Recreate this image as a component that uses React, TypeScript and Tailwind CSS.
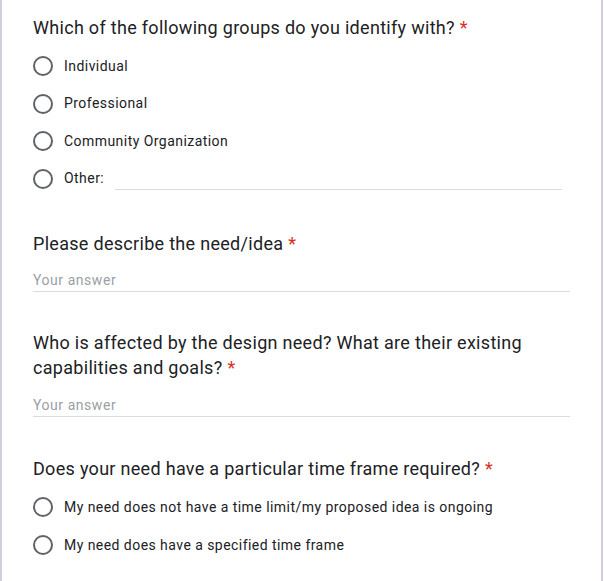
const font = { fontFamily: 'Roboto, "Liberation Sans", sans-serif' };

function Title({ children }: { children: React.ReactNode }) {
  return (
    <h2 className="text-[18px] leading-[25px] text-[#202124] font-normal tracking-[0.3px]">
      {children}
      <span className="text-[#d93025] ml-[5px]">*</span>
    </h2>
  );
}

function Radio({ label, children }: { label: string; children?: React.ReactNode }) {
  return (
    <div className="flex items-center h-6">
      <span className="w-5 h-5 rounded-full border-2 border-[#5f6368] shrink-0" />
      <span className="ml-[11px] text-[14px] text-[#202124] tracking-[0.45px]">{label}</span>
      {children}
    </div>
  );
}

function Answer({ className = 'mt-[14.5px]' }: { className?: string }) {
  return (
    <div className={`${className} h-[22px] border-b border-[#dadce0] text-[14px] leading-[20px] text-[#9aa0a6] tracking-[0.55px]`}>
      Your answer
    </div>
  );
}

export default function App() {
  return (
    <div className="w-[604px] h-[581px] bg-white overflow-hidden" style={font}>
      <div className="w-[603px] min-h-[581px] bg-white border-l-2 border-r-2 border-[#d3cde0] pl-[31px] pr-[31px] pt-[14.5px] pb-10">
        {/* Groups */}
        <section>
          <Title>Which of the following groups do you identify with?</Title>
          <div className="mt-[14.5px] flex flex-col gap-[13.5px]">
            <Radio label="Individual" />
            <Radio label="Professional" />
            <Radio label="Community Organization" />
            <Radio label="Other:">
              <div className="ml-[11px] w-[447px] h-6 border-b border-[#dadce0] -translate-y-px" />
            </Radio>
          </div>
        </section>

        {/* Need */}
        <section className="mt-[40px]">
          <Title>Please describe the need/idea</Title>
          <Answer />
        </section>

        {/* Affected */}
        <section className="mt-[37.5px]">
          <Title>
            Who is affected by the design need? What are their existing
            <br />
            capabilities and goals?
          </Title>
          <Answer className="mt-[15.5px]" />
        </section>

        {/* Time frame */}
        <section className="mt-[38.5px]">
          <Title>Does your need have a particular time frame required?</Title>
          <div className="mt-[14.5px] flex flex-col gap-[14px]">
            <Radio label="My need does not have a time limit/my proposed idea is ongoing" />
            <Radio label="My need does have a specified time frame" />
          </div>
        </section>
      </div>
    </div>
  );
}
